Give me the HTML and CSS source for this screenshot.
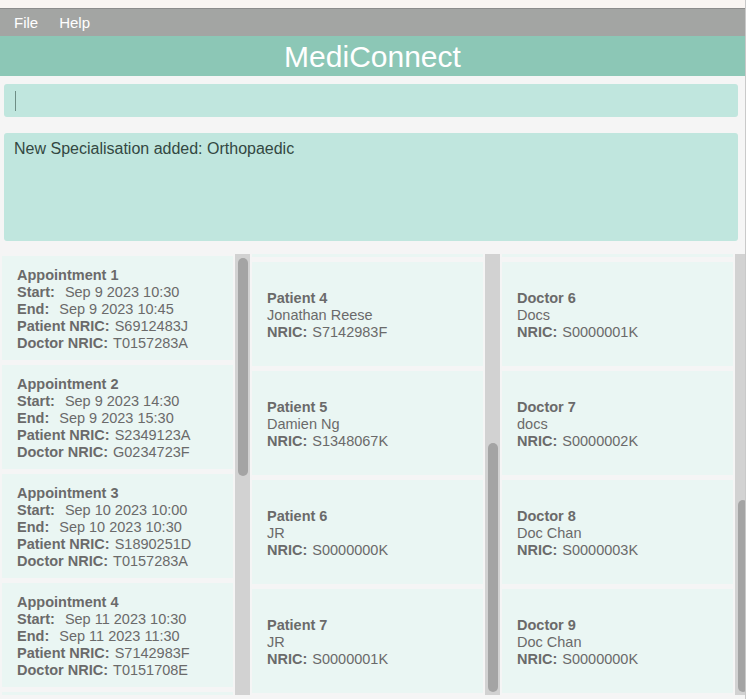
FILE: index.html
```html
<!DOCTYPE html>
<html>
<head>
<meta charset="utf-8">
<title>MediConnect</title>
<link rel="stylesheet" href="styles.css">
</head>
<body>
<div class="window">
  <div class="os-strip"></div>
  <div class="menubar">
    <span class="menu-item">File</span>
    <span class="menu-item">Help</span>
  </div>
  <div class="titlebar">MediConnect</div>
  <div class="main">
    <div class="command-box"><span class="caret"></span></div>
    <div class="result-box">New Specialisation added: Orthopaedic</div>
    <div class="lists">
      <div class="column">
        <div class="list list-first">
          <div class="card appt">
            <div class="title">Appointment 1</div>
            <div class="row"><b class="lbl wide">Start:</b><span>Sep 9 2023 10:30</span></div>
            <div class="row"><b class="lbl wide">End:</b><span>Sep 9 2023 10:45</span></div>
            <div class="row"><b class="lbl">Patient NRIC:</b><span>S6912483J</span></div>
            <div class="row"><b class="lbl">Doctor NRIC:</b><span>T0157283A</span></div>
          </div>
          <div class="card appt">
            <div class="title">Appointment 2</div>
            <div class="row"><b class="lbl wide">Start:</b><span>Sep 9 2023 14:30</span></div>
            <div class="row"><b class="lbl wide">End:</b><span>Sep 9 2023 15:30</span></div>
            <div class="row"><b class="lbl">Patient NRIC:</b><span>S2349123A</span></div>
            <div class="row"><b class="lbl">Doctor NRIC:</b><span>G0234723F</span></div>
          </div>
          <div class="card appt">
            <div class="title">Appointment 3</div>
            <div class="row"><b class="lbl wide">Start:</b><span>Sep 10 2023 10:00</span></div>
            <div class="row"><b class="lbl wide">End:</b><span>Sep 10 2023 10:30</span></div>
            <div class="row"><b class="lbl">Patient NRIC:</b><span>S1890251D</span></div>
            <div class="row"><b class="lbl">Doctor NRIC:</b><span>T0157283A</span></div>
          </div>
          <div class="card appt">
            <div class="title">Appointment 4</div>
            <div class="row"><b class="lbl wide">Start:</b><span>Sep 11 2023 10:30</span></div>
            <div class="row"><b class="lbl wide">End:</b><span>Sep 11 2023 11:30</span></div>
            <div class="row"><b class="lbl">Patient NRIC:</b><span>S7142983F</span></div>
            <div class="row"><b class="lbl">Doctor NRIC:</b><span>T0151708E</span></div>
          </div>
          <div class="card stub"></div>
        </div>
        <div class="scrollbar"><div class="thumb thumb-a"></div></div>
      </div>
      <div class="column">
        <div class="list">
          <div class="card stub-top"></div>
          <div class="card person">
            <div class="title">Patient 4</div>
            <div class="row"><span>Jonathan Reese</span></div>
            <div class="row"><b class="lbl">NRIC:</b><span>S7142983F</span></div>
          </div>
          <div class="card person">
            <div class="title">Patient 5</div>
            <div class="row"><span>Damien Ng</span></div>
            <div class="row"><b class="lbl">NRIC:</b><span>S1348067K</span></div>
          </div>
          <div class="card person">
            <div class="title">Patient 6</div>
            <div class="row"><span>JR</span></div>
            <div class="row"><b class="lbl">NRIC:</b><span>S0000000K</span></div>
          </div>
          <div class="card person">
            <div class="title">Patient 7</div>
            <div class="row"><span>JR</span></div>
            <div class="row"><b class="lbl">NRIC:</b><span>S0000001K</span></div>
          </div>
        </div>
        <div class="scrollbar"><div class="thumb thumb-b"></div></div>
      </div>
      <div class="column">
        <div class="list">
          <div class="card stub-top"></div>
          <div class="card person">
            <div class="title">Doctor 6</div>
            <div class="row"><span>Docs</span></div>
            <div class="row"><b class="lbl">NRIC:</b><span>S0000001K</span></div>
          </div>
          <div class="card person">
            <div class="title">Doctor 7</div>
            <div class="row"><span>docs</span></div>
            <div class="row"><b class="lbl">NRIC:</b><span>S0000002K</span></div>
          </div>
          <div class="card person">
            <div class="title">Doctor 8</div>
            <div class="row"><span>Doc Chan</span></div>
            <div class="row"><b class="lbl">NRIC:</b><span>S0000003K</span></div>
          </div>
          <div class="card person">
            <div class="title">Doctor 9</div>
            <div class="row"><span>Doc Chan</span></div>
            <div class="row"><b class="lbl">NRIC:</b><span>S0000000K</span></div>
          </div>
        </div>
        <div class="scrollbar"><div class="thumb thumb-c"></div></div>
      </div>
    </div>
  </div>
</div>
</body>
</html>
```

FILE: styles.css
```css
* { box-sizing: border-box; }
html, body {
  margin: 0;
  padding: 0;
  background: #ffffff;
  font-family: "Liberation Sans", Arial, sans-serif;
}
.window {
  width: 746px;
  height: 699px;
  overflow: hidden;
  border-right: 1px solid #c9c9c9;
  display: flex;
  flex-direction: column;
  background: #f5f5f5;
}
.os-strip {
  height: 9px;
  flex: none;
  background: #f9f5f2;
  border-bottom: 1px solid #8c8c8c;
}
.menubar {
  height: 27px;
  flex: none;
  background: #a3a5a3;
  display: flex;
  align-items: center;
  padding-left: 14px;
  gap: 21px;
}
.menu-item {
  color: #ffffff;
  font-size: 15px;
}
.titlebar {
  height: 40px;
  flex: none;
  background: #8cc7b6;
  color: #ffffff;
  font-size: 30px;
  display: flex;
  align-items: center;
  justify-content: center;
  padding-top: 2px;
}
.main {
  flex: 1;
  display: flex;
  flex-direction: column;
  min-height: 0;
  padding-top: 8px;
}
.command-box {
  margin: 0 7px 0 4px;
  height: 33px;
  background: #c0e6de;
  border-radius: 3px;
  display: flex;
  align-items: center;
  padding-left: 11px;
  flex: none;
}
.caret {
  width: 1px;
  height: 20px;
  background: #6e8d85;
}
.result-box {
  margin: 16px 7px 0 4px;
  height: 108px;
  background: #c0e6de;
  border-radius: 3px;
  padding: 7px 10px;
  color: #334842;
  font-size: 16px;
  line-height: 18px;
  flex: none;
}
.lists {
  margin-top: 13px;
  flex: 1;
  min-height: 0;
  display: flex;
  width: 750px;
  padding-bottom: 4px;
}
.column {
  width: 250px;
  flex: none;
  display: flex;
}
.list {
  flex: 1;
  overflow: hidden;
  padding: 0 2px;
  display: flex;
  flex-direction: column;
  gap: 5px;
}
.list-first {
  padding-top: 2px;
}
.card {
  flex: none;
  height: 104px;
  background: #eaf6f3;
  padding-left: 15px;
  padding-top: 2px;
  display: flex;
  flex-direction: column;
  justify-content: center;
  color: #6a6a6a;
  font-size: 14.5px;
  line-height: 17px;
}
.stub-top {
  height: 3px;
  padding: 0;
}
.stub {
  height: 20px;
}
.title {
  font-weight: bold;
}
.row {
  display: flex;
  white-space: nowrap;
}
.lbl {
  font-weight: bold;
  margin-right: 5px;
}
.lbl.wide {
  margin-right: 10px;
}
.scrollbar {
  width: 15px;
  flex: none;
  background: #d2d2d2;
  position: relative;
}
.thumb {
  position: absolute;
  left: 3px;
  width: 10px;
  background: #a4a4a4;
  border-radius: 5px;
}
.thumb-a { top: 4px; height: 218px; }
.thumb-b { top: 189px; height: 249px; }
.thumb-c { top: 246px; height: 192px; }
```
